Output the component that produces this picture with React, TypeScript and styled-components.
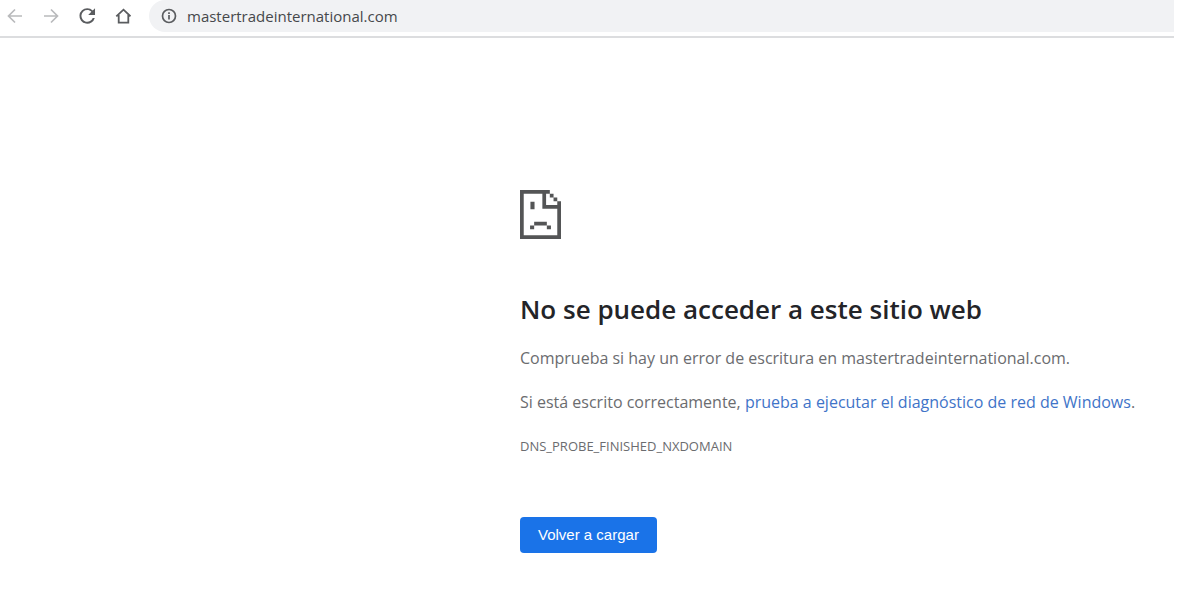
import React from "react";
import styled, { createGlobalStyle } from "styled-components";

const GlobalStyle = createGlobalStyle`
  * { box-sizing: border-box; }
  body { margin: 0; background: #fff; font-family: "Open Sans", "Noto Sans", sans-serif; color: #6b6c6f; }
`;

const Toolbar = styled.header`
  display: flex;
  align-items: center;
  height: 38px;
  margin-right: 4px;
  padding: 0 0 4px 5px;
  border-bottom: 2px solid #dcdddf;
`;

const NavButton = styled.button<{ $dim?: boolean }>`
  display: flex;
  align-items: center;
  justify-content: center;
  width: 20px;
  height: 20px;
  margin-right: 16px;
  padding: 0;
  border: 0;
  background: none;
  color: ${(p) => (p.$dim ? "#b9babc" : "#5a5c5f")};
`;

const AddressBar = styled.label`
  display: flex;
  flex: 1;
  align-items: center;
  gap: 10px;
  height: 32px;
  padding-left: 12px;
  border-radius: 16px 0 0 16px;
  background: #f1f2f4;
  color: #5a5c5f;
`;

const AddressInput = styled.input`
  flex: 1;
  min-width: 0;
  padding: 0;
  border: 0;
  outline: 0;
  background: none;
  color: #46484b;
  font: 400 15px "Open Sans", "Noto Sans", sans-serif;
`;

const ErrorPage = styled.main`
  display: flex;
  flex-direction: column;
  align-items: flex-start;
  padding: 152px 0 40px 520px;
`;

const Title = styled.h1`
  margin: 53px 0 0;
  color: #232428;
  font-size: 26px;
  font-weight: 600;
  line-height: 34px;
  white-space: nowrap;
`;

const Text = styled.p`
  margin: 20px 0 0;
  font-size: 16px;
  line-height: 24px;
  white-space: nowrap;
`;

const Code = styled.p`
  margin: 20px 0 0;
  font-size: 13px;
  line-height: 24px;
`;

const DiagnosticsLink = styled.a`
  color: #3f74c8;
  text-decoration: none;
`;

const ReloadButton = styled.button`
  height: 36px;
  margin-top: 59px;
  padding: 0 18px 2px;
  border: 0;
  border-radius: 4px;
  background: #1a73e8;
  color: #fff;
  font: 400 15px "Liberation Sans", Arial, sans-serif;
`;

const Arrow = ({ flip }: { flip?: boolean }) => (
  <svg width="16" height="16" viewBox="0 0 16 16" fill="none" stroke="currentColor" strokeWidth="1.7">
    <path d={flip ? "M1 8h13M8 1.5 14.5 8 8 14.5" : "M15 8H2M8 1.5 1.5 8 8 14.5"} />
  </svg>
);

const ReloadIcon = () => (
  <svg width="18" height="18" viewBox="2.5 2.8 18.5 18.5" fill="currentColor">
    <path d="M17.65 6.35A7.96 7.96 0 0 0 12 4a8 8 0 1 0 7.73 10h-2.08A6 6 0 1 1 12 6c1.66 0 3.14.69 4.22 1.78L13 11h7V4z" />
  </svg>
);

const HomeIcon = () => (
  <svg width="16" height="16" viewBox="0 0 16 16" fill="none" stroke="currentColor" strokeWidth="1.8">
    <path d="M1.3 8.3 8.5 1.7l7 6.6M3.7 7v7.6h9.6V7" />
  </svg>
);

const InfoIcon = () => (
  <svg width="16" height="16" viewBox="0 0 16 16" fill="none" stroke="currentColor" strokeWidth="1.7">
    <circle cx="8" cy="8" r="6.5" />
    <path d="M8 7v4.4M8 4.3v1.6" />
  </svg>
);

const SadPageIcon = () => (
  <svg width="41" height="49" viewBox="0 0 11 13" preserveAspectRatio="none" fill="#545556">
    <path d="M0 0h8v1h1v1h1v1h1v10H0zM1 1v11h9V5H6V1zM7 1v3h3V3H9V2H8V1z" fillRule="evenodd" />
    <path d="M2.8 3.1h1.1v2H2.8zM3.8 8.4h3.4v1H3.8zM2.7 9.4h1.1v1H2.7zM7.2 9.4h1.1v1H7.2z" />
  </svg>
);

export default function App() {
  return (
    <>
      <GlobalStyle />
      <Toolbar>
        <NavButton $dim aria-label="Atrás"><Arrow /></NavButton>
        <NavButton $dim aria-label="Adelante"><Arrow flip /></NavButton>
        <NavButton aria-label="Recargar"><ReloadIcon /></NavButton>
        <NavButton aria-label="Inicio"><HomeIcon /></NavButton>
        <AddressBar>
          <InfoIcon />
          <AddressInput aria-label="Dirección" defaultValue="mastertradeinternational.com" />
        </AddressBar>
      </Toolbar>
      <ErrorPage>
        <SadPageIcon />
        <Title>No se puede acceder a este sitio web</Title>
        <Text>Comprueba si hay un error de escritura en mastertradeinternational.com.</Text>
        <Text>
          Si está escrito correctamente,{" "}
          <DiagnosticsLink href="#diagnostico">prueba a ejecutar el diagnóstico de red de Windows</DiagnosticsLink>.
        </Text>
        <Code>DNS_PROBE_FINISHED_NXDOMAIN</Code>
        <ReloadButton>Volver a cargar</ReloadButton>
      </ErrorPage>
    </>
  );
}
